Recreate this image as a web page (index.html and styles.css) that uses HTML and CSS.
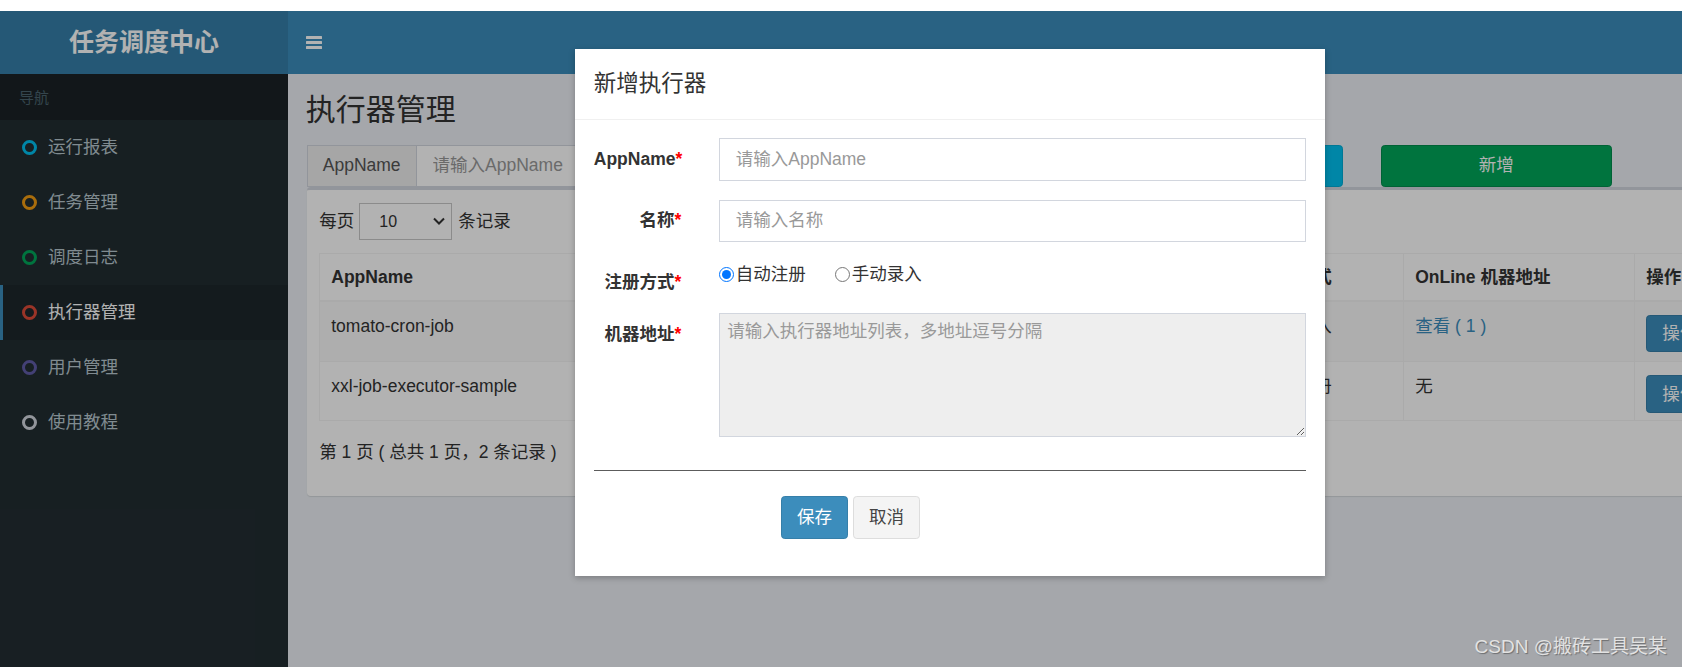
FILE: index.html
```html
<!DOCTYPE html>
<html lang="zh-CN">
<head>
<meta charset="utf-8">
<title>执行器管理</title>
<link rel="stylesheet" href="styles.css">
</head>
<body>
<div class="topstrip"></div>
<div class="app">
  <header class="main-header">
    <div class="logo">任务调度中心</div>
    <nav class="navbar">
      <svg class="toggle" width="16" height="13" viewBox="0 0 16 13"><rect x="0" y="0" width="16" height="3" rx="0.5"/><rect x="0" y="5" width="16" height="3" rx="0.5"/><rect x="0" y="10" width="16" height="3" rx="0.5"/></svg>
    </nav>
  </header>
  <div class="wrapper">
    <aside class="sidebar">
      <div class="sb-header">导航</div>
      <ul class="menu">
        <li class="item"><span class="ring ring-aqua"></span>运行报表</li>
        <li class="item"><span class="ring ring-yellow"></span>任务管理</li>
        <li class="item"><span class="ring ring-green"></span>调度日志</li>
        <li class="item active"><span class="ring ring-red"></span>执行器管理</li>
        <li class="item"><span class="ring ring-purple"></span>用户管理</li>
        <li class="item"><span class="ring ring-gray"></span>使用教程</li>
      </ul>
    </aside>
    <main class="content">
      <h1 class="page-title">执行器管理</h1>
      <div class="filters">
        <div class="input-group"><span class="addon">AppName</span><input class="field" type="text" placeholder="请输入AppName"></div>
        <div class="input-group"><span class="addon">名称</span><input class="field" type="text" placeholder="请输入名称"></div>
        <button class="btn btn-block btn-info" type="button">搜索</button>
        <button class="btn btn-block btn-success" type="button">新增</button>
      </div>
      <section class="box">
        <div class="length">
          <span>每页</span>
          <div class="select"><span>10</span><svg width="12" height="8" viewBox="0 0 12 8"><path d="M1 1.5 L6 6.5 L11 1.5" fill="none" stroke="#333" stroke-width="2"/></svg></div>
          <span>条记录</span>
        </div>
        <table class="table">
          <colgroup>
            <col class="c-app"><col class="c-name"><col class="c-type"><col class="c-online"><col class="c-op">
          </colgroup>
          <thead>
            <tr><th>AppName</th><th>名称</th><th>注册方式</th><th>OnLine 机器地址</th><th>操作</th></tr>
          </thead>
          <tbody>
            <tr class="r1"><td>tomato-cron-job</td><td>番茄定时任务</td><td>手动录入</td><td><a class="link">查看 ( 1 )</a></td><td><button class="btn btn-primary btn-op" type="button">操作 ▾</button></td></tr>
            <tr class="r2"><td>xxl-job-executor-sample</td><td>示例执行器</td><td>自动注册</td><td>无</td><td><button class="btn btn-primary btn-op" type="button">操作 ▾</button></td></tr>
          </tbody>
        </table>
        <div class="info">第 1 页 ( 总共 1 页，2 条记录 )</div>
      </section>
    </main>
  </div>
  <div class="backdrop"></div>
  <div class="modal">
    <div class="modal-header"><h4 class="modal-title">新增执行器</h4></div>
    <form class="modal-body">
      <div class="form-row">
        <label class="form-label">AppName<span class="req">*</span></label>
        <input class="form-input" type="text" placeholder="请输入AppName">
      </div>
      <div class="form-row">
        <label class="form-label">名称<span class="req">*</span></label>
        <input class="form-input" type="text" placeholder="请输入名称">
      </div>
      <div class="form-row">
        <label class="form-label">注册方式<span class="req">*</span></label>
        <div class="radios">
          <label class="radio"><input type="radio" name="addressType" checked><span>自动注册</span></label>
          <label class="radio"><input type="radio" name="addressType"><span>手动录入</span></label>
        </div>
      </div>
      <div class="form-row">
        <label class="form-label">机器地址<span class="req">*</span></label>
        <textarea class="form-textarea" readonly placeholder="请输入执行器地址列表，多地址逗号分隔"></textarea>
      </div>
      <hr class="divider">
      <div class="actions">
        <button type="button" class="btn btn-primary">保存</button>
        <button type="button" class="btn btn-default">取消</button>
      </div>
    </form>
  </div>
</div>
<div class="watermark">CSDN @搬砖工具吴某</div>
</body>
</html>
```

FILE: styles.css
```css
* { box-sizing: border-box; }

html, body {
  margin: 0;
  padding: 0;
  width: 1682px;
  height: 667px;
  overflow: hidden;
}

body {
  position: relative;
  font-family: "Liberation Sans", "Noto Sans CJK SC", sans-serif;
  font-size: 17.5px;
  line-height: 25px;
  color: #333;
  background: #fff;
}

.topstrip { height: 11px; background: #fff; }

.app {
  position: relative;
  height: 656px;
  overflow: hidden;
}

/* header */
.main-header { display: flex; height: 63px; }
.logo {
  width: 288px;
  flex: none;
  background: #367fa9;
  color: #fff;
  font-size: 25px;
  font-weight: 700;
  display: flex;
  align-items: center;
  justify-content: center;
}
.navbar {
  flex: 1;
  background: #3c8dbc;
  display: flex;
  align-items: center;
  padding-left: 18px;
}
.toggle { display: block; fill: #fff; }

/* layout */
.wrapper { display: flex; height: 593px; }

.sidebar { width: 288px; flex: none; background: #222d32; }
.sb-header {
  height: 46px;
  display: flex;
  align-items: center;
  padding-left: 19px;
  background: #1a2226;
  color: #4b646f;
  font-size: 15px;
}
.menu { list-style: none; margin: 0; padding: 0; }
.item {
  height: 55px;
  display: flex;
  align-items: center;
  padding-left: 22px;
  color: #b8c7ce;
}
.item.active {
  background: #1e282c;
  color: #fff;
  box-shadow: inset 3px 0 0 #3c8dbc;
}
.ring {
  width: 15px;
  height: 15px;
  border: 3px solid;
  border-radius: 50%;
  margin-right: 11px;
  flex: none;
}
.ring-aqua { border-color: #00c0ef; }
.ring-yellow { border-color: #f39c12; }
.ring-green { border-color: #00a65a; }
.ring-red { border-color: #dd4b39; }
.ring-purple { border-color: #605ca8; }
.ring-gray { border-color: #d2d6de; }

/* content */
.content {
  flex: none;
  width: 1611px;
  background: #ecf0f5;
  padding: 18.75px;
}
.page-title {
  margin: 0 0 0 -1px;
  font-size: 30px;
  font-weight: 400;
  line-height: 33px;
  color: #333;
}

.filters {
  margin-top: 18.75px;
  display: grid;
  grid-template-columns: 365.25px 365.25px 231px 231px;
  column-gap: 37.5px;
  height: 42.5px;
}
.input-group { display: flex; height: 42.5px; }
.addon {
  display: flex;
  align-items: center;
  padding: 0 15px;
  background: #eee;
  border: 1px solid #d2d6de;
  color: #555;
}
.field {
  flex: 1;
  min-width: 0;
  height: 42.5px;
  border: 1px solid #d2d6de;
  border-left: 0;
  padding: 0 16px;
  font: inherit;
  color: #555;
  background: #fff;
}
.field::placeholder { color: #999; }

.btn {
  font: inherit;
  height: 42.5px;
  padding: 0 15px;
  border: 1px solid transparent;
  border-radius: 3.75px;
  line-height: 25px;
}
.btn-block { width: 100%; color: #fff; }
.btn-info { background: #00c0ef; border-color: #00acd6; }
.btn-success { background: #00a65a; border-color: #008d4c; }
.btn-primary { background: #3c8dbc; border-color: #367fa9; color: #fff; }
.btn-default { background: #f4f4f4; border-color: #ddd; color: #444; }

/* box */
.box {
  width: 1573.5px;
  background: #fff;
  border-top: 3.75px solid #d2d6de;
  border-radius: 3.75px;
  box-shadow: 0 1px 1px rgba(0, 0, 0, 0.1);
  padding: 12.5px;
}
.length {
  display: flex;
  align-items: center;
  height: 37.5px;
}
.select {
  width: 93px;
  height: 37.5px;
  margin: 0 6px 0 5px;
  border: 1px solid #c8c8c8;
  display: flex;
  align-items: center;
  justify-content: space-between;
  padding: 0 6px 0 19px;
  font-size: 16px;
}
.select svg { display: block; }

.table {
  margin-top: 13.25px;
  width: 1548.5px;
  table-layout: fixed;
  border-collapse: collapse;
  border: 1px solid #f4f4f4;
}
.c-app { width: 450px; }
.c-name { width: 480.5px; }
.c-type { width: 153.5px; }
.c-online { width: 231px; }
.c-op { width: 233.5px; }
.table th {
  height: 47px;
  padding: 0 11px;
  text-align: left;
  font-weight: 700;
  border: 1px solid #f4f4f4;
  border-bottom: 2px solid #f4f4f4;
  vertical-align: middle;
  white-space: nowrap;
}
.table td {
  padding: 12px 11px 0;
  vertical-align: top;
  border: 1px solid #f4f4f4;
  white-space: nowrap;
}
.table .r1 td { height: 61px; }
.table .r2 td { height: 59px; }
.table .r1 { background: #f9f9f9; }
.link { color: #3c8dbc; }
.btn-op {
  height: 37.5px;
  margin-top: 1px;
  padding: 0 15px;
}

.info {
  padding: 18.5px 0 19px;
  line-height: 25px;
}

/* modal */
.backdrop {
  position: absolute;
  inset: 0;
  background: rgba(0, 0, 0, 0.3);
  z-index: 2;
}
.modal {
  position: absolute;
  top: 38px;
  left: 575px;
  width: 750px;
  background: #fff;
  box-shadow: 0 2px 6px rgba(0, 0, 0, 0.25);
  z-index: 3;
}
.modal-header {
  padding: 18.75px;
  border-bottom: 1px solid #f0f0f0;
}
.modal-title {
  margin: 0;
  font-size: 22.5px;
  font-weight: 400;
  line-height: 32px;
  color: #333;
}
.modal-body {
  display: block;
  margin: 0;
  padding: 18.75px;
}
.form-row {
  display: grid;
  grid-template-columns: 87.5px 587.5px;
  column-gap: 37.5px;
  margin-bottom: 18.75px;
}
.form-label {
  padding-top: 8.75px;
  text-align: right;
  font-weight: 700;
  white-space: nowrap;
  color: #333;
}
.req { color: #f00; font-weight: 700; }
.form-input {
  height: 42.5px;
  width: 100%;
  border: 1px solid #d2d6de;
  padding: 0 16px;
  font: inherit;
  color: #555;
  background: #fff;
}
.form-input::placeholder { color: #999; }
.radios {
  display: flex;
  padding-top: 1.5px;
  height: 33.75px;
}
.radio {
  display: inline-flex;
  align-items: center;
  height: 25px;
  margin-right: 29px;
  color: #333;
}
.radio input {
  width: 15px;
  height: 15px;
  margin: 0 2px 0 0;
  flex: none;
}
.form-textarea {
  display: block;
  width: 100%;
  height: 124px;
  border: 1px solid #d2d6de;
  background: #eee;
  padding: 5px 7.5px;
  font: inherit;
  line-height: 25px;
  color: #555;
}
.form-textarea::placeholder { color: #999; }
.divider {
  border: 0;
  border-top: 1px solid #5c5c5c;
  height: 0;
  margin: 33px 0 25px;
}
.actions {
  display: flex;
  gap: 5px;
  margin-left: 187.25px;
  margin-bottom: 18.75px;
}

.watermark {
  position: absolute;
  right: 15px;
  bottom: 8px;
  font-size: 19px;
  line-height: 24px;
  color: #e2e2e2;
  text-shadow: 1px 1px 1px rgba(0, 0, 0, 0.35);
  z-index: 10;
}
```
